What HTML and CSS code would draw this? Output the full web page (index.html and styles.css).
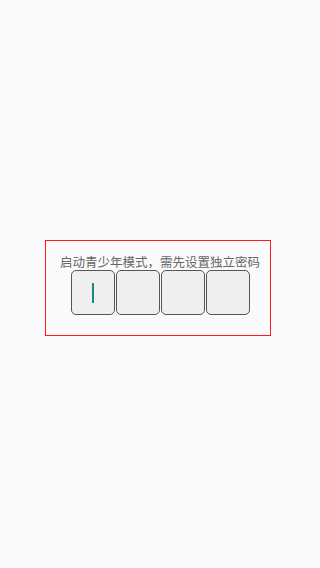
FILE: index.html
```html
<!DOCTYPE html>
<html lang="zh">

<head>
    <meta charset="UTF-8">
    <meta name="viewport" content="width=device-width, initial-scale=1.0">
    <title>青少年模式</title>
    <link rel="stylesheet" href="styles.css">
</head>

<body>
    <div class="page">
        <div class="pwd-box">
            <p class="tip">启动青少年模式，需先设置独立密码</p>
            <div class="cells">
                <div class="cell active"><span class="cursor"></span></div>
                <div class="cell"></div>
                <div class="cell"></div>
                <div class="cell"></div>
            </div>
        </div>
    </div>
</body>

</html>
```
FILE: styles.css
```css
* {
    margin: 0;
    padding: 0;
    box-sizing: border-box;
}

body {
    background-color: #fafafa;
    font-family: "Noto Sans CJK SC", "Noto Sans", sans-serif;
}

.page {
    width: 320px;
    height: 568px;
    padding-top: 240px;
}

.pwd-box {
    width: 226px;
    height: 96px;
    margin-left: 45px;
    border: 1px solid #ff1a1a;
    padding: 13px 0 0 4px;
    display: flex;
    flex-direction: column;
    align-items: center;
}

.tip {
    font-size: 12.5px;
    line-height: 16px;
    color: #666;
    white-space: nowrap;
}

.cells {
    display: flex;
    gap: 1px;
}

.cell {
    width: 44px;
    height: 45px;
    border: 1px solid #555;
    border-radius: 5px;
    background-color: #efefef;
    display: flex;
    align-items: center;
    justify-content: center;
}

.cursor {
    width: 2px;
    height: 20px;
    background-color: #17897b;
}
```
